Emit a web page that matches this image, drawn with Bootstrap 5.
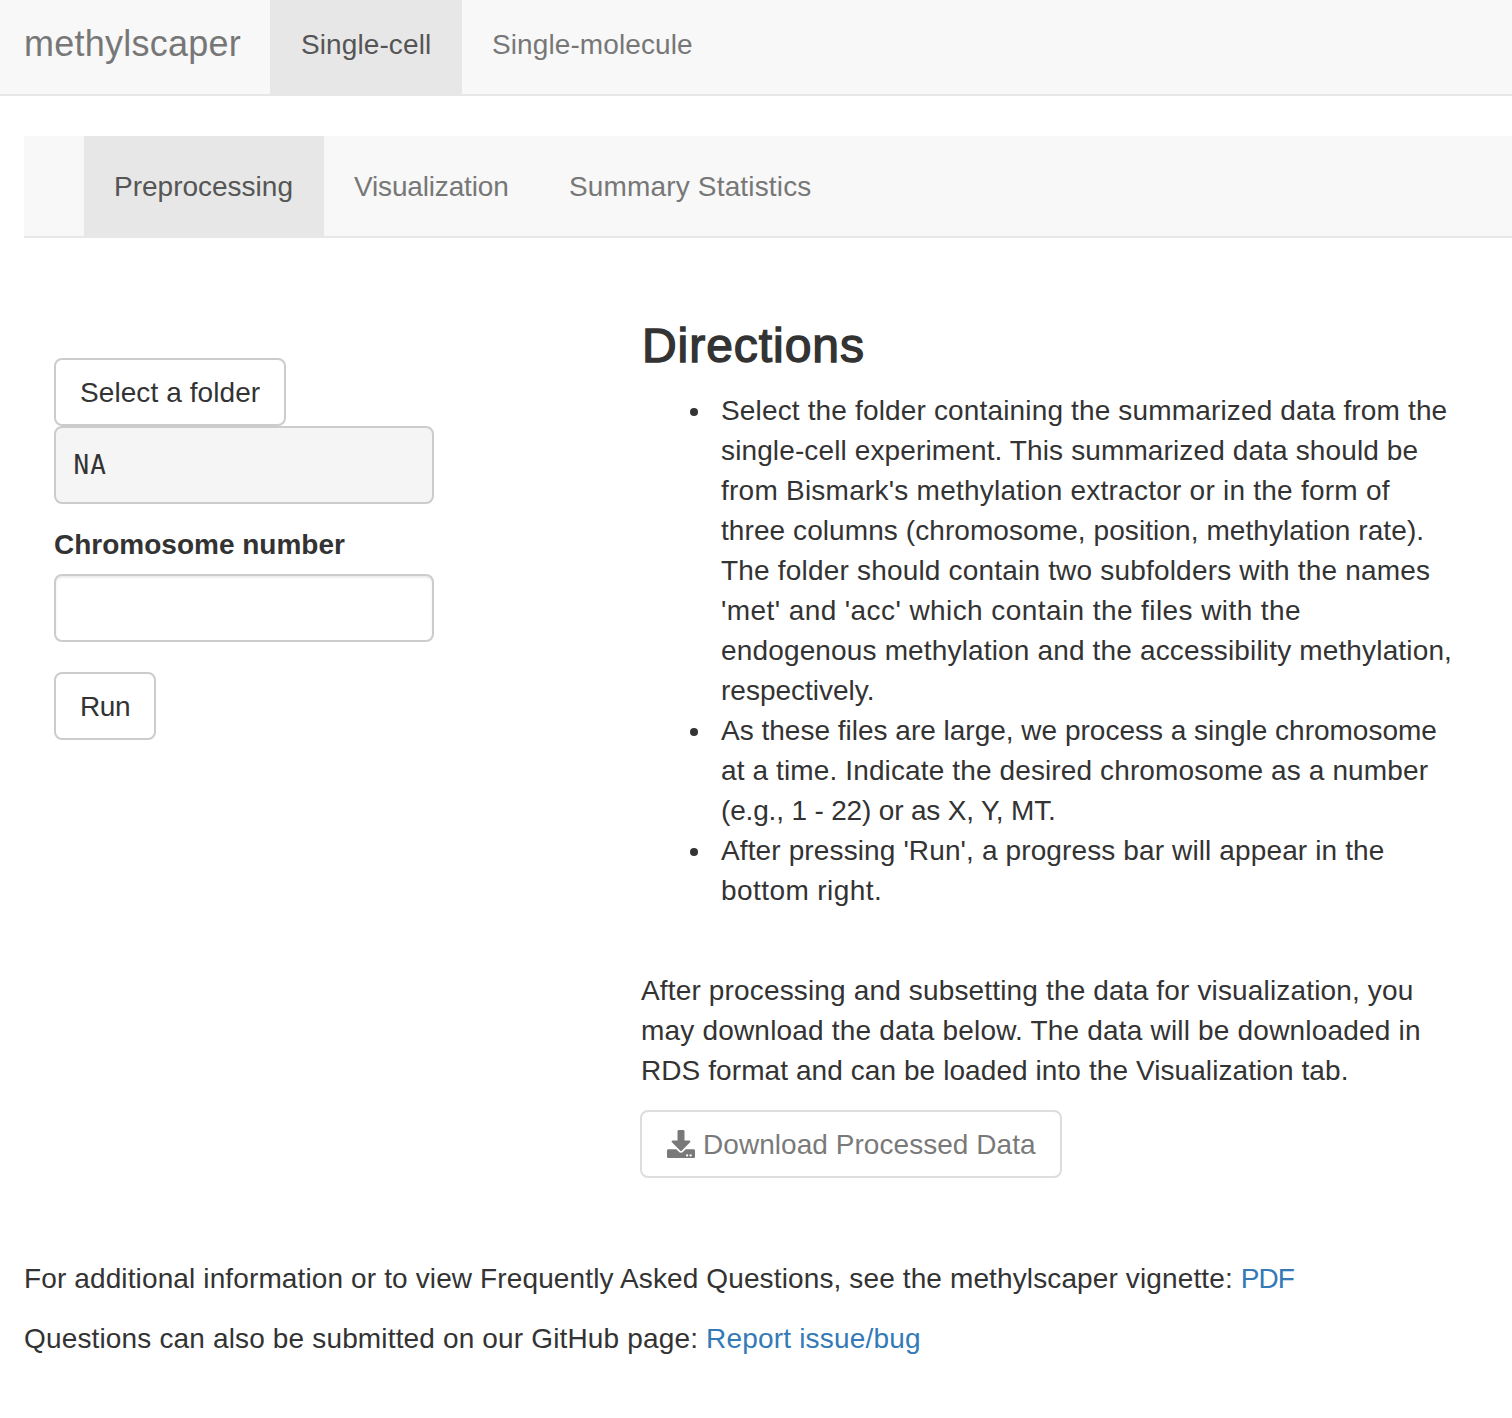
<!DOCTYPE html>
<html lang="en">
<head>
<meta charset="utf-8">
<meta name="viewport" content="width=device-width, initial-scale=1">
<title>methylscaper</title>
<link href="https://cdn.jsdelivr.net/npm/bootstrap@5.3.0/dist/css/bootstrap.min.css" rel="stylesheet">
<style>
body{font-family:"Liberation Sans",Arial,sans-serif;font-size:28px;line-height:40px;color:#333;background:#fff;overflow-x:hidden}
.bar{background:#f8f8f8;border-bottom:2px solid #e7e7e7;--bs-navbar-padding-y:0;--bs-navbar-padding-x:0}
.bar .nav-link{color:#777;padding:0 30px!important;line-height:40px;white-space:nowrap}
.bar .nav-link.active{color:#555;background:#e7e7e7}
.bar-top{height:96px}
.bar-top .navbar-brand{font-size:36px;line-height:40px;color:#777;width:270px;margin:0;padding:24px 0 30px 24px;letter-spacing:.25px}
.bar-top .nav-link{padding-top:25px!important;height:96px;margin-bottom:-2px;letter-spacing:.1px}
.bar-sub{height:102px;margin:40px 0 0 24px;padding-left:60px!important}
.bar-sub .nav-link{padding-top:31px!important;height:102px;margin-bottom:-2px}
.bar .tab-a{width:192px;padding-left:31px!important}
.tab-b{width:240px}
.bar .tab-c{width:215px;letter-spacing:-.16px}
.bar .tab-d{letter-spacing:.16px}
.panes{padding:80px 0 0 54px}
.side{width:380px;margin-top:40px}
.guide{width:841px;margin-left:207px}
.btn-plain{--bs-btn-color:#333;--bs-btn-border-color:#ccc;--bs-btn-bg:#fff;border-width:2px;border-radius:8px;font-size:28px;line-height:40px;padding:13px 24px 11px;height:68px;white-space:nowrap}
.btn-plain:disabled{color:#333;border-color:#ccc;background:#fff;opacity:.65}
.btn-pick{width:232px;letter-spacing:.08px}
.btn-run{width:102px;letter-spacing:-.4px}
.btn-get{width:422px;margin-left:-1px;padding-left:25px;letter-spacing:.05px}
.btn-get svg{margin-top:-3px}
.pathbox{font-family:"DejaVu Sans Mono",monospace;font-size:26px;letter-spacing:.9px;line-height:37px;height:78px;padding:19px 17.6px;background:#f5f5f5;border:2px solid #ccc;border-radius:8px;margin-bottom:20px;color:#333}
.side .form-label{font-weight:700;margin-bottom:9px;padding-top:1px;display:block}
.side .form-control{height:68px;border:2px solid #ccc;border-radius:8px;box-shadow:inset 0 2px 2px rgba(0,0,0,.075);margin-bottom:30px}
.guide h2{font-size:48px;line-height:53px;margin:0 0 19px;padding:1px 0 0 1px;font-weight:400;letter-spacing:.95px;-webkit-text-stroke:1.4px #333}
.guide ul{padding-left:72px;margin-bottom:60px}
.guide li{padding-left:8px}
.ln{display:block;white-space:nowrap}
.t-2{letter-spacing:-.17px}.t1{letter-spacing:.08px}.t2{letter-spacing:.125px}.t3{letter-spacing:.155px}.t4{letter-spacing:.19px}.t5{letter-spacing:.24px}.t6{letter-spacing:.42px}
.guide p{margin-bottom:19px}
.foot{padding:81px 0 0 24px}
.foot p{margin-bottom:20px;white-space:nowrap}
.foot a{color:#337ab7;text-decoration:none}
.foot .pdf{letter-spacing:-.9px}
</style>
</head>
<body>
<nav class="navbar navbar-expand bar bar-top align-items-start">
  <a class="navbar-brand" href="#">methylscaper</a>
  <div class="navbar-nav">
    <a class="nav-link active tab-a" href="#">Single-cell</a>
    <a class="nav-link" href="#">Single-molecule</a>
  </div>
</nav>
<nav class="navbar navbar-expand bar bar-sub align-items-start">
  <div class="navbar-nav">
    <a class="nav-link active tab-b" href="#">Preprocessing</a>
    <a class="nav-link tab-c" href="#">Visualization</a>
    <a class="nav-link tab-d" href="#">Summary Statistics</a>
  </div>
</nav>
<main class="panes d-flex align-items-start">
  <form class="side flex-shrink-0">
    <button type="button" class="btn btn-plain btn-pick d-block">Select a folder</button>
    <div class="pathbox">NA</div>
    <label class="form-label" for="chrom">Chromosome number</label>
    <input id="chrom" type="text" class="form-control">
    <button type="button" class="btn btn-plain btn-run d-block">Run</button>
  </form>
  <section class="guide flex-shrink-0">
    <h2>Directions</h2>
    <ul>
      <li><span class="ln t3">Select the folder containing the summarized data from the</span> <span class="ln t2">single-cell experiment. This summarized data should be</span> <span class="ln t5">from Bismark's methylation extractor or in the form of</span> <span class="ln t1">three columns (chromosome, position, methylation rate).</span> <span class="ln t4">The folder should contain two subfolders with the names</span> <span class="ln t6">'met' and 'acc' which contain the files with the</span> <span class="ln t3">endogenous methylation and the accessibility methylation,</span> <span class="ln">respectively.</span></li>
      <li><span class="ln">As these files are large, we process a single chromosome</span> <span class="ln t2">at a time. Indicate the desired chromosome as a number</span> <span class="ln t-2">(e.g., 1 - 22) or as X, Y, MT.</span></li>
      <li><span class="ln t2">After pressing 'Run', a progress bar will appear in the</span> <span class="ln t6">bottom right.</span></li>
    </ul>
    <p><span class="ln t3">After processing and subsetting the data for visualization, you</span> <span class="ln t4">may download the data below. The data will be downloaded in</span> <span class="ln t1">RDS format and can be loaded into the Visualization tab.</span></p>
    <button type="button" class="btn btn-plain btn-get d-flex align-items-center" disabled><svg class="me-2 flex-shrink-0" width="28" height="28" viewBox="0 0 512 512" fill="currentColor" aria-hidden="true"><path d="M216 0h80c13.3 0 24 10.7 24 24v168h87.7c17.8 0 26.7 21.5 14.1 34.1L269.7 378.3c-7.5 7.5-19.8 7.5-27.3 0L90.1 226.1c-12.6-12.6-3.7-34.1 14.1-34.1H192V24c0-13.3 10.7-24 24-24zm296 376v112c0 13.3-10.7 24-24 24H24c-13.3 0-24-10.7-24-24V376c0-13.3 10.7-24 24-24h146.7l49 49c20.1 20.1 52.5 20.1 72.6 0l49-49H488c13.3 0 24 10.7 24 24zm-124 88c0-11-9-20-20-20s-20 9-20 20 9 20 20 20 20-9 20-20zm64 0c0-11-9-20-20-20s-20 9-20 20 9 20 20 20 20-9 20-20z"/></svg><span>Download Processed Data</span></button>
  </section>
</main>
<footer class="foot">
  <p class="t2">For additional information or to view Frequently Asked Questions, see the methylscaper vignette: <a class="pdf" href="#">PDF</a></p>
  <p class="t3">Questions can also be submitted on our GitHub page: <a class="t4" href="#">Report issue/bug</a></p>
</footer>
<script src="https://cdn.jsdelivr.net/npm/bootstrap@5.3.0/dist/js/bootstrap.bundle.min.js"></script>
</body>
</html>
